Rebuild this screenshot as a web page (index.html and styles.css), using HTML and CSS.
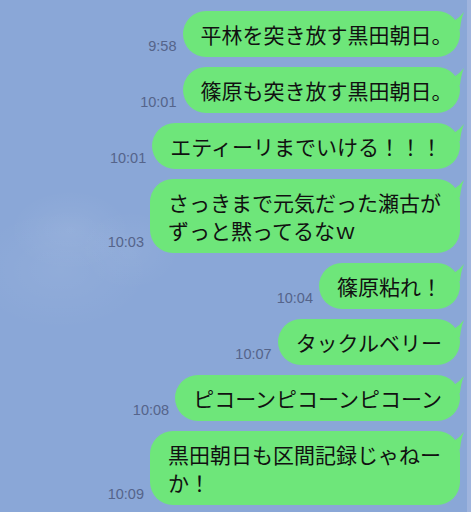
FILE: index.html
```html
<!DOCTYPE html>
<html lang="ja">
<head>
    <meta charset="UTF-8">
    <meta name="viewport" content="width=device-width, initial-scale=1.0">
    <title>トーク</title>
    <link rel="stylesheet" href="styles.css">
</head>
<body>
    <div class="chat">
        <div class="row">
            <span class="time">9:58</span>
            <div class="bubble">平林を突き放す黒田朝日<span class="punct">。</span></div>
        </div>
        <div class="row">
            <span class="time">10:01</span>
            <div class="bubble">篠原も突き放す黒田朝日<span class="punct">。</span></div>
        </div>
        <div class="row">
            <span class="time">10:01</span>
            <div class="bubble">エティーリまでいける！！！</div>
        </div>
        <div class="row">
            <span class="time">10:03</span>
            <div class="bubble">さっきまで元気だった瀬古がずっと黙ってるなｗ</div>
        </div>
        <div class="row">
            <span class="time">10:04</span>
            <div class="bubble">篠原粘れ！</div>
        </div>
        <div class="row">
            <span class="time">10:07</span>
            <div class="bubble">タックルベリー</div>
        </div>
        <div class="row">
            <span class="time">10:08</span>
            <div class="bubble">ピコーンピコーンピコーン</div>
        </div>
        <div class="row">
            <span class="time">10:09</span>
            <div class="bubble">黒田朝日も区間記録じゃねーか！</div>
        </div>
    </div>
</body>
</html>
```

FILE: styles.css
```css
body {
    margin: 0;
    height: 512px;
    overflow: hidden;
    font-family: "Noto Sans CJK JP", sans-serif;
    background-color: #8aa7d7;
    background-image:
        linear-gradient(to right, transparent 467px, #9fb4dd 467px),
        radial-gradient(ellipse 60px 40px at 70px 230px, rgba(255, 255, 255, 0.07), transparent),
        radial-gradient(ellipse 90px 60px at 60px 270px, rgba(255, 255, 255, 0.06), transparent),
        radial-gradient(ellipse 50px 40px at 130px 250px, rgba(255, 255, 255, 0.05), transparent);
}
.chat {
    display: flex;
    flex-direction: column;
    gap: 10px;
    padding: 11px 11px 0 0;
}
.row {
    display: flex;
    justify-content: flex-end;
    align-items: flex-end;
    gap: 6px;
}
.time {
    font-family: "Liberation Sans", Arial, sans-serif;
    font-size: 14.5px;
    color: #55648a;
    margin-bottom: 3px;
}
.bubble {
    position: relative;
    box-sizing: border-box;
    max-width: 310px;
    padding: 9px 18px;
    background-color: #6ee67a;
    border-radius: 23px;
    color: #111;
    font-size: 21px;
    line-height: 28px;
}
.bubble::after {
    content: "";
    position: absolute;
    top: 0;
    right: -4px;
    width: 12px;
    height: 18px;
    background-color: #6ee67a;
    clip-path: path('M2 10 Q8 6 12 1 Q9 8 8 18 L0 18 Z');
}
.punct {
    letter-spacing: -0.5em;
}
```
